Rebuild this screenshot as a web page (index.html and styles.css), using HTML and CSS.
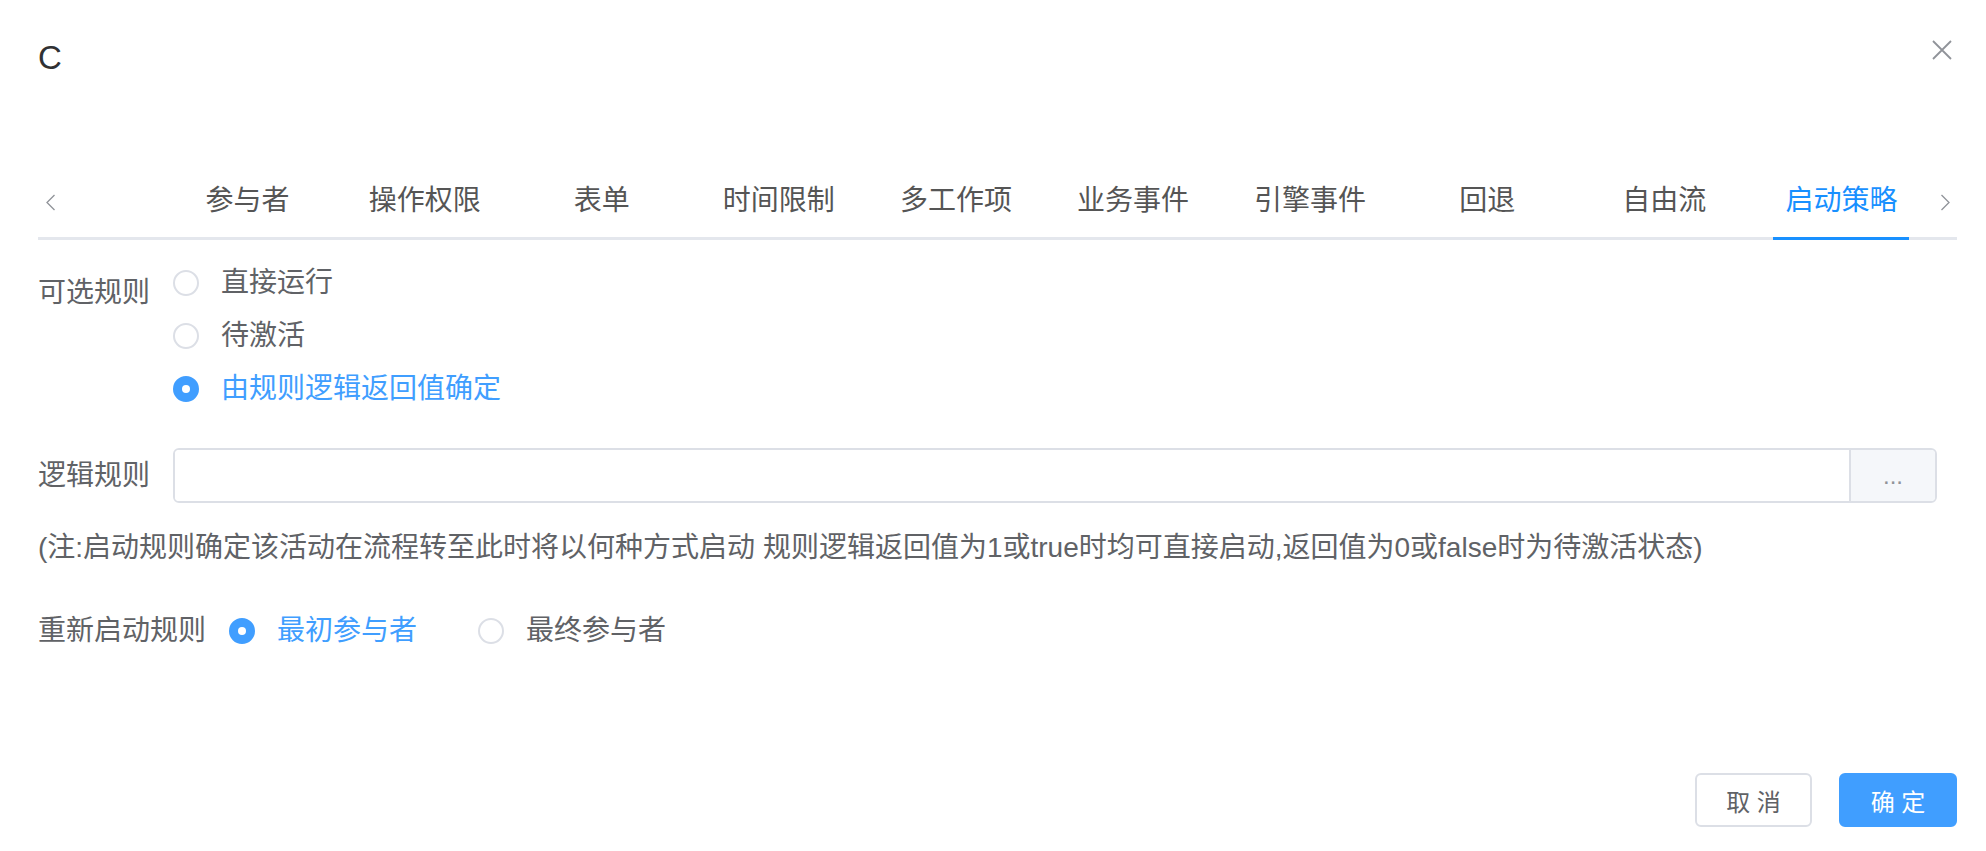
FILE: index.html
```html
<!DOCTYPE html>
<html lang="zh-CN">
<head>
  <meta charset="UTF-8">
  <meta name="viewport" content="width=device-width, initial-scale=1.0">
  <title>C</title>
  <link rel="stylesheet" href="styles.css">
</head>
<body>
  <div class="dialog">
    <div class="dialog-header">
      <span class="dialog-title">C</span>
      <button class="dialog-close" type="button" aria-label="关闭">
        <svg width="20" height="20" viewBox="0 0 20 20">
          <path d="M1 1 L19 19 M19 1 L1 19" stroke="#909399" stroke-width="1.8" fill="none"/>
        </svg>
      </button>
    </div>

    <div class="tabs-nav">
      <span class="tab-arrow">
        <svg width="11" height="17" viewBox="0 0 11 17">
          <polyline points="9.5,1 2,8.5 9.5,16" stroke="#909399" stroke-width="1.3" fill="none"/>
        </svg>
      </span>
      <div class="tab-list">
        <div class="tab">参与者</div>
        <div class="tab">操作权限</div>
        <div class="tab">表单</div>
        <div class="tab">时间限制</div>
        <div class="tab">多工作项</div>
        <div class="tab">业务事件</div>
        <div class="tab">引擎事件</div>
        <div class="tab">回退</div>
        <div class="tab">自由流</div>
        <div class="tab active"><span>启动策略</span></div>
      </div>
      <span class="tab-arrow">
        <svg width="11" height="17" viewBox="0 0 11 17">
          <polyline points="1.5,1 9,8.5 1.5,16" stroke="#909399" stroke-width="1.3" fill="none"/>
        </svg>
      </span>
    </div>

    <form class="form">
      <div class="form-item rules-item">
        <label class="form-label">可选规则</label>
        <div class="radio-group vertical">
          <label class="radio"><span class="radio-dot"></span><span class="radio-text">直接运行</span></label>
          <label class="radio"><span class="radio-dot"></span><span class="radio-text">待激活</span></label>
          <label class="radio checked"><span class="radio-dot"></span><span class="radio-text">由规则逻辑返回值确定</span></label>
        </div>
      </div>

      <div class="form-item logic-item">
        <label class="form-label">逻辑规则</label>
        <div class="input-group">
          <input class="input" type="text">
          <div class="input-append">...</div>
        </div>
      </div>

      <p class="note">(注:启动规则确定该活动在流程转至此时将以何种方式启动 规则逻辑返回值为1或true时均可直接启动,返回值为0或false时为待激活状态)</p>

      <div class="form-item restart-item">
        <label class="form-label">重新启动规则</label>
        <div class="radio-group inline">
          <label class="radio checked"><span class="radio-dot"></span><span class="radio-text">最初参与者</span></label>
          <label class="radio"><span class="radio-dot"></span><span class="radio-text">最终参与者</span></label>
        </div>
      </div>
    </form>

    <div class="dialog-footer">
      <button class="btn" type="button">取 消</button>
      <button class="btn primary" type="button">确 定</button>
    </div>
  </div>
</body>
</html>
```

FILE: styles.css
```css
body {
  margin: 0;
  background: #fff;
  color: #606266;
  font-family: "Liberation Sans", "Noto Sans CJK SC", sans-serif;
}

.dialog {
  padding: 38px 29px 0 38px;
}

.dialog-header {
  display: flex;
  justify-content: space-between;
  align-items: flex-start;
  height: 40px;
}

.dialog-title {
  font-size: 33px;
  line-height: 40px;
  color: #303133;
}

.dialog-close {
  width: 20px;
  height: 20px;
  margin: 2px 5px 0 0;
  padding: 0;
  border: none;
  background: none;
  cursor: pointer;
}

.dialog-close svg {
  display: block;
}

/* tabs */
.tabs-nav {
  margin-top: 81px;
  height: 78px;
  display: flex;
  border-bottom: 3px solid #e4e7ed;
}

.tab-arrow {
  width: 24px;
  display: flex;
  justify-content: center;
  padding-top: 35px;
  box-sizing: border-box;
}

.tab-list {
  flex: 1;
  display: flex;
  padding: 0 3px 0 97px;
}

.tab {
  flex: 1;
  padding-top: 6px;
  text-align: center;
  font-size: 28px;
  line-height: 72px;
  color: #555;
  white-space: nowrap;
}

.tab.active span {
  display: inline-block;
  padding: 0 12px;
  margin-bottom: -3px;
  border-bottom: 3px solid #1890ff;
  color: #1890ff;
}

/* form */
.form {
  margin: 16px 0 0;
  padding-right: 20px;
}

.form-item {
  display: flex;
}

.form-label {
  flex-shrink: 0;
  margin-right: 23px;
  font-size: 28px;
  line-height: 53px;
  color: #606266;
}

.rules-item .form-label {
  padding-top: 10px;
}

.radio-group.vertical {
  display: flex;
  flex-direction: column;
}

.radio-group.inline {
  display: flex;
  gap: 61px;
}

.radio {
  display: flex;
  align-items: center;
  height: 53px;
  font-size: 28px;
  color: #606266;
  cursor: pointer;
}

.radio-text {
  line-height: 53px;
}

.radio-dot {
  width: 26px;
  height: 26px;
  box-sizing: border-box;
  margin-right: 22px;
  border: 2px solid #dcdfe6;
  border-radius: 50%;
  background: #fff;
  display: flex;
  align-items: center;
  justify-content: center;
}

.radio.checked {
  color: #409eff;
}

.radio.checked .radio-dot {
  background: #409eff;
  border-color: #409eff;
}

.radio.checked .radio-dot::after {
  content: "";
  width: 8px;
  height: 8px;
  border-radius: 50%;
  background: #fff;
}

.logic-item {
  margin-top: 33px;
  align-items: center;
}

.input-group {
  flex: 1;
  display: flex;
  height: 55px;
  box-sizing: border-box;
  border: 2px solid #dcdfe6;
  border-radius: 6px;
  overflow: hidden;
}

.input {
  flex: 1;
  min-width: 0;
  padding: 0 15px;
  border: none;
  outline: none;
  font-size: 28px;
  font-family: inherit;
  color: #606266;
}

.input-append {
  width: 86px;
  box-sizing: border-box;
  border-left: 2px solid #dcdfe6;
  background: #f5f7fa;
  color: #909399;
  font-size: 24px;
  display: flex;
  align-items: center;
  justify-content: center;
}

.note {
  margin: 18px 0 0;
  font-size: 28px;
  line-height: 53px;
  color: #606266;
  white-space: nowrap;
}

.restart-item {
  margin-top: 30px;
}

/* footer */
.dialog-footer {
  margin-top: 116px;
  display: flex;
  justify-content: flex-end;
  gap: 27px;
}

.btn {
  width: 117px;
  height: 54px;
  box-sizing: border-box;
  padding: 0;
  border: 2px solid #dcdfe6;
  border-radius: 6px;
  background: #fff;
  color: #606266;
  font-size: 24px;
  font-family: inherit;
  cursor: pointer;
}

.btn.primary {
  width: 118px;
  background: #409eff;
  border-color: #409eff;
  color: #fff;
}
```
